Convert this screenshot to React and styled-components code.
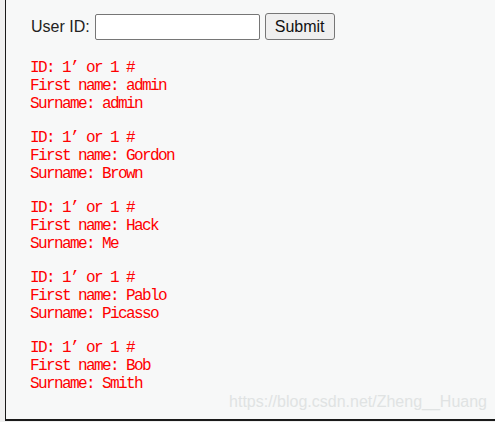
import React from "react";
import styled, { createGlobalStyle } from "styled-components";

const Global = createGlobalStyle`
  html, body { margin: 0; padding: 0; }
  body {
    background: #f0f0f0;
    font-family: "Liberation Sans", Arial, sans-serif;
    width: 495px;
    height: 422px;
    overflow: hidden;
  }
`;

const Page = styled.div`
  padding-left: 5px;
  height: 422px;
  box-sizing: border-box;
`;

const Panel = styled.div`
  position: relative;
  box-sizing: border-box;
  height: 421px;
  background: #f7f8f8;
  border-left: 1px solid #1a1a1a;
  border-bottom: 2px solid #1a1a1a;
  padding: 13px 0 0 24px;
  display: flex;
  flex-direction: column;
`;

const Form = styled.form`
  display: flex;
  align-items: center;
  gap: 5px;
  height: 27px;
  margin: 0;
`;

const Label = styled.label`
  font-size: 16px;
  color: #222;
  margin-left: 1px;
`;

const Input = styled.input`
  box-sizing: border-box;
  width: 165px;
  height: 26px;
  border: 1px solid #767676;
  border-radius: 2px;
  background: #fff;
  padding: 0 3px;
  margin: 0;
  font-size: 16px;
`;

const Button = styled.button`
  box-sizing: border-box;
  width: 70px;
  height: 27px;
  margin: 0;
  padding: 0;
  border: 1px solid #767676;
  border-radius: 3px;
  background: #efefef;
  color: #111;
  font-family: "Liberation Sans", Arial, sans-serif;
  font-size: 16px;
`;

const Results = styled.div`
  display: flex;
  flex-direction: column;
  gap: 16px;
  margin-top: 19px;
`;

const Pre = styled.pre`
  margin: 0;
  font-family: "Liberation Mono", "DejaVu Sans Mono", monospace;
  font-size: 16px;
  letter-spacing: -1.6px;
  line-height: 18px;
  color: #ff0000;
`;

const Watermark = styled.div`
  position: absolute;
  right: 8px;
  bottom: 8px;
  font-family: "Liberation Sans", Arial, sans-serif;
  font-size: 16px;
  color: #e0e3e3;
`;

const rows = [
  ["admin", "admin"],
  ["Gordon", "Brown"],
  ["Hack", "Me"],
  ["Pablo", "Picasso"],
  ["Bob", "Smith"],
];

export default function App() {
  return (
    <>
      <Global />
      <Page>
        <Panel>
          <Form onSubmit={(e) => e.preventDefault()}>
            <Label>User ID:</Label>
            <Input type="text" />
            <Button type="submit">Submit</Button>
          </Form>
          <Results>
            {rows.map(([f, s]) => (
              <Pre key={f}>{`ID: 1’ or 1 #\nFirst name: ${f}\nSurname: ${s}`}</Pre>
            ))}
          </Results>
          <Watermark>https://blog.csdn.net/Zheng__Huang</Watermark>
        </Panel>
      </Page>
    </>
  );
}
